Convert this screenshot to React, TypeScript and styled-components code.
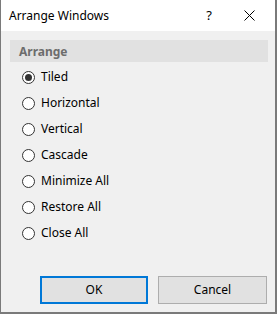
import React, { useState } from 'react';
import styled, { createGlobalStyle } from 'styled-components';

const GlobalStyle = createGlobalStyle`
  html, body {
    margin: 0;
    padding: 0;
    background: #ffffff;
  }
  * {
    box-sizing: border-box;
  }
`;

const options = [
  'Tiled',
  'Horizontal',
  'Vertical',
  'Cascade',
  'Minimize All',
  'Restore All',
  'Close All',
];

function App() {
  const [selected, setSelected] = useState('Tiled');

  return (
    <>
      <GlobalStyle />
      <Window>
        <TitleBar>
          <Title>Arrange Windows</Title>
          <HelpButton>?</HelpButton>
          <CloseButton>
            <svg width="11" height="11" viewBox="0 0 11 11">
              <path d="M0.5 0.5 L10.5 10.5 M10.5 0.5 L0.5 10.5" stroke="#000" strokeWidth="1" />
            </svg>
          </CloseButton>
        </TitleBar>
        <Body>
          <GroupHeader>Arrange</GroupHeader>
          <RadioList>
            {options.map((opt) => (
              <RadioRow key={opt} onClick={() => setSelected(opt)}>
                <RadioCircle $checked={selected === opt} />
                <RadioLabel>{opt}</RadioLabel>
              </RadioRow>
            ))}
          </RadioList>
          <ButtonRow>
            <DialogButton $primary>OK</DialogButton>
            <DialogButton>Cancel</DialogButton>
          </ButtonRow>
        </Body>
      </Window>
    </>
  );
}

export default App;

const Window = styled.div`
  width: 277px;
  height: 314px;
  display: flex;
  flex-direction: column;
  border-left: 1px solid #7a7a7a;
  border-right: 2px solid #7a7a7a;
  border-bottom: 2px solid #7a7a7a;
  font-family: 'Noto Sans', 'Open Sans', sans-serif;
  font-size: 12px;
  color: #000;
`;

const TitleBar = styled.div`
  height: 31px;
  flex: none;
  display: flex;
  align-items: center;
  background: #ffffff;
  padding-left: 8px;
`;

const Title = styled.span`
  flex: 1;
  font-size: 12px;
  padding-bottom: 1px;
`;

const HelpButton = styled.span`
  width: 40px;
  text-align: center;
  font-size: 13px;
  padding-bottom: 2px;
`;

const CloseButton = styled.span`
  width: 46px;
  display: flex;
  justify-content: center;
  align-items: center;
  padding-right: 6px;
`;

const Body = styled.div`
  flex: 1;
  display: flex;
  flex-direction: column;
  background: #f0f0f0;
  padding: 9px 7px 8px 9px;
`;

const GroupHeader = styled.div`
  height: 22px;
  display: flex;
  align-items: center;
  padding-left: 9px;
  background: #e1e1e1;
  color: #6d6d6d;
  font-weight: bold;
  font-size: 12px;
`;

const RadioList = styled.div`
  display: flex;
  flex-direction: column;
  padding-top: 2px;
  padding-left: 12px;
`;

const RadioRow = styled.div`
  height: 26px;
  display: flex;
  align-items: center;
  gap: 6px;
  cursor: default;
`;

const RadioCircle = styled.span<{ $checked?: boolean }>`
  width: 13px;
  height: 13px;
  border-radius: 50%;
  border: 1px solid #333333;
  background: #ffffff;
  display: flex;
  align-items: center;
  justify-content: center;
  flex: none;

  &::after {
    content: '';
    width: 7px;
    height: 7px;
    border-radius: 50%;
    background: #333333;
    display: ${(p) => (p.$checked ? 'block' : 'none')};
  }
`;

const RadioLabel = styled.span`
  font-size: 12px;
  padding-bottom: 1px;
`;

const ButtonRow = styled.div`
  margin-top: auto;
  display: flex;
  justify-content: flex-end;
  gap: 10px;
  padding-right: 1px;
`;

const DialogButton = styled.button<{ $primary?: boolean }>`
  width: ${(p) => (p.$primary ? '108px' : '109px')};
  height: 28px;
  background: #e1e1e1;
  border: ${(p) => (p.$primary ? '2px solid #0078d7' : '1px solid #adadad')};
  font-family: 'Noto Sans', 'Open Sans', sans-serif;
  font-size: 12px;
  color: #000;
  padding: 0 0 1px;
`;
